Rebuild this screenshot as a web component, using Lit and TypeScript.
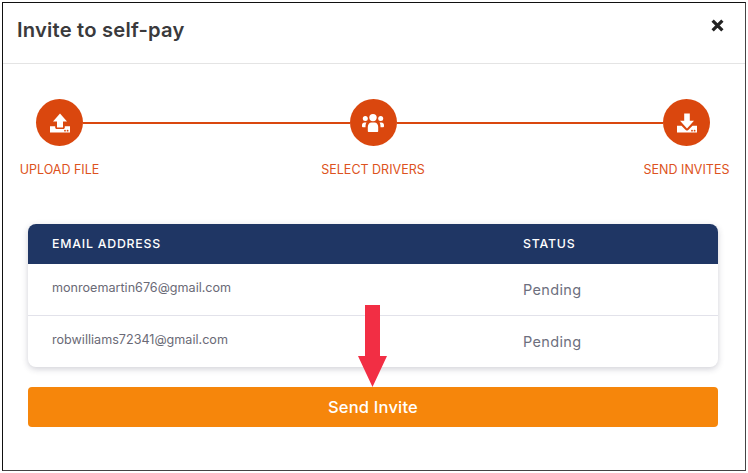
import { LitElement, css, html, svg } from "lit";
import { customElement } from "lit/decorators.js";

const uploadIcon = svg`
  <path d="M12 2.500 19 10.500h-4V16.500H9V10.500H5z" fill="#fff" />
  <path fill-rule="evenodd" d="M2 15.200h5.200v1.300c0 .9.700 1.500 1.500 1.500h6.600c.8 0 1.500-.6 1.500-1.500v-1.300H22V21.500H2zM17 18.800a.9.900 0 1 0 0 1.800.9.900 0 0 0 0-1.800zM19.600 18.800a.9.900 0 1 0 0 1.800.9.900 0 0 0 0-1.800z" fill="#fff" />
`;

const downloadIcon = svg`
  <path d="M9.200 2.500h5.600V9.800H19L12 17.600 5 9.800h4.200z" fill="#fff" />
  <path fill-rule="evenodd" d="M2 14.800h4.500L10.700 19c.8.700 1.800.7 2.600 0l4.200-4.200H22V21.500H2zM17 18.800a.9.900 0 1 0 0 1.800.9.900 0 0 0 0-1.800zM19.600 18.800a.9.900 0 1 0 0 1.800.9.900 0 0 0 0-1.800z" fill="#fff" />
`;

const driversIcon = svg`
  <circle cx="12" cy="6.600" r="3.700" fill="#fff" />
  <circle cx="4.300" cy="7.600" r="2.500" fill="#fff" />
  <circle cx="19.700" cy="7.600" r="2.500" fill="#fff" />
  <path d="M6.800 20v-4c0-2.400 1.600-4.400 3.600-4.400h3.200c2 0 3.600 2 3.600 4.400v4c0 .6-.4 1-1 1H7.800c-.6 0-1-.4-1-1z" fill="#fff" />
  <path d="M5.500 11.600c-.7.900-1 2.400-1 3.800v.8H1.900c-.6 0-.9-.4-.9-.9v-1c0-1.600 1.100-2.700 2.500-2.700z" fill="#fff" />
  <path d="M18.500 11.600c.7.900 1 2.400 1 3.800v.8h2.600c.6 0 .9-.4.900-.9v-1c0-1.600-1.100-2.700-2.500-2.700z" fill="#fff" />
`;

const steps = [
  { label: "UPLOAD FILE", icon: uploadIcon },
  { label: "SELECT DRIVERS", icon: driversIcon },
  { label: "SEND INVITES", icon: downloadIcon },
];

const invites = [
  { email: "monroemartin676@gmail.com", status: "Pending" },
  { email: "robwilliams72341@gmail.com", status: "Pending" },
];

@customElement("app-root")
export class AppRoot extends LitElement {
  render() {
    return html`
      <div class="modal">
        <header class="header">
          <h1>Invite to self-pay</h1>
          <svg class="close" viewBox="0 0 12 12" width="13" height="13">
            <path d="M1.500 1.500 10.500 10.500M10.500 1.500 1.500 10.500" stroke="#222" stroke-width="3" />
          </svg>
        </header>

        <div class="stepper">
          ${steps.map(
            (step, i) => html`
              ${i > 0 ? html`<div class="line"></div>` : ""}
              <div class="circle">
                <svg viewBox="0 0 24 24" width="24" height="24">${step.icon}</svg>
              </div>
            `
          )}
          ${steps.map(
            (step, i) => html`
              ${i > 0 ? html`<span></span>` : ""}
              <div class="label">${step.label}</div>
            `
          )}
        </div>

        <div class="content">
          <div class="table">
            <div class="row head">
              <div>EMAIL ADDRESS</div>
              <div>STATUS</div>
            </div>
            ${invites.map(
              (invite) => html`
                <div class="row">
                  <div class="email">${invite.email}</div>
                  <div class="status">${invite.status}</div>
                </div>
              `
            )}
          </div>

          <button class="send">Send Invite</button>

          <svg class="arrow" viewBox="0 0 29 82" width="29" height="82">
            <path d="M7 0h15v51h7L14.500 82 0 51h7z" fill="#f22a40" fill-opacity="0.98" />
          </svg>
        </div>
      </div>
    `;
  }

  static styles = css`
    :host {
      display: block;
      width: 748px;
      height: 473px;
      box-sizing: border-box;
      padding: 2px;
      background: #fff;
      font-family: "Inter", "Liberation Sans", sans-serif;
    }

    .modal {
      box-sizing: border-box;
      height: 469px;
      border: 1px solid #111;
      border-right-color: #444;
      border-bottom-color: #444;
      background: #fff;
    }

    .header {
      box-sizing: border-box;
      height: 61px;
      padding: 0 21px 0 14px;
      display: flex;
      justify-content: space-between;
      border-bottom: 1px solid #e4e4e4;
    }

    h1 {
      margin: 14px 0 0;
      font-size: 20.200px;
      line-height: 26px;
      font-weight: 600;
      color: #3a3a3c;
      letter-spacing: 0.2px;
    }

    .close {
      margin-top: 16px;
    }

    .stepper {
      display: grid;
      grid-template-columns: 47px 1fr 47px 1fr 47px;
      padding: 35px 35px 0 33px;
    }

    .circle {
      width: 47px;
      height: 47px;
      border-radius: 50%;
      background: #da470e;
      display: flex;
      align-items: center;
      justify-content: center;
    }

    .line {
      height: 2px;
      align-self: center;
      background: #da470e;
    }

    .label {
      justify-self: center;
      white-space: nowrap;
      margin-top: 16px;
      font-size: 12.500px;
      line-height: 16px;
      color: #dd5220;
    }

    .content {
      position: relative;
      padding: 46px 27px 0 25px;
    }

    .table {
      border-radius: 8px;
      background: #fff;
      box-shadow: 0 2px 6px rgba(40, 40, 70, 0.22);
      overflow: hidden;
    }

    .row {
      display: grid;
      grid-template-columns: 471px 1fr;
      padding: 0 24px;
      height: 52px;
      box-sizing: border-box;
      border-bottom: 1px solid #e2e2ea;
    }

    .row:last-child {
      height: 51px;
      border-bottom: none;
    }

    .head {
      height: 40px;
      padding-bottom: 2px;
      align-items: center;
      background: #1f3664;
      color: #fff;
      font-size: 12.300px;
      font-weight: 500;
      letter-spacing: 0.8px;
      border-bottom: none;
    }

    .email {
      padding-top: 15px;
      font-size: 12.600px;
      line-height: 17px;
      color: #6a6a76;
    }

    .status {
      padding-top: 16px;
      font-size: 14.500px;
      line-height: 19px;
      color: #6d6f7e;
      letter-spacing: 0.35px;
    }

    .send {
      display: block;
      width: 100%;
      height: 40px;
      margin-top: 20px;
      border: none;
      border-radius: 4px;
      background: #f6860b;
      color: #fff;
      font-family: inherit;
      font-size: 16.500px;
      font-weight: 500;
      letter-spacing: 0.2px;
    }

    .arrow {
      position: absolute;
      left: 355px;
      top: 127px;
    }
  `;
}
